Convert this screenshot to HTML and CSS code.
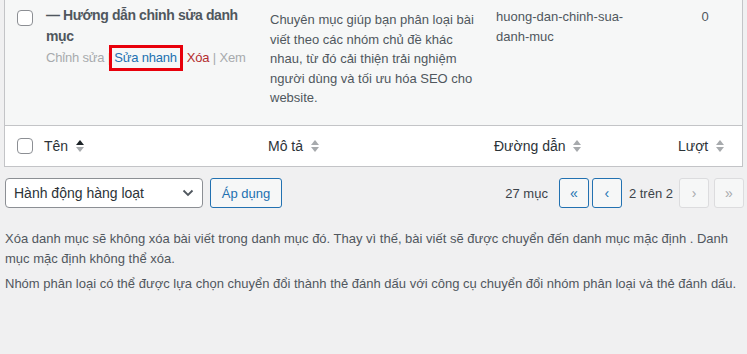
FILE: index.html
```html
<!DOCTYPE html>
<html lang="vi">
<head>
    <meta charset="UTF-8">
    <meta name="viewport" content="width=device-width, initial-scale=1.0">
    <title>Danh mục</title>
    <link rel="stylesheet" href="styles.css">
</head>
<body>
    <table class="list-table">
        <colgroup>
            <col class="col-check"><col class="col-name"><col class="col-desc"><col class="col-slug"><col class="col-posts">
        </colgroup>
        <tbody>
            <tr class="row">
                <th class="check"><span class="checkbox"></span></th>
                <td class="name">
                    <strong class="row-title">— Hướng dẫn chỉnh sửa danh mục</strong>
                    <div class="row-actions">
                        <span class="muted">Chỉnh sửa</span> <span class="sep">|</span> <span class="quick marked">Sửa nhanh</span> <span class="sep">|</span> <span class="delete">Xóa</span> <span class="sep">|</span> <span class="muted">Xem</span>
                    </div>
                </td>
                <td class="desc">Chuyên mục giúp bạn phân loại bài viết theo các nhóm chủ đề khác nhau, từ đó cải thiện trải nghiệm người dùng và tối ưu hóa SEO cho website.</td>
                <td class="slug">huong-dan-chinh-sua-danh-muc</td>
                <td class="posts">0</td>
            </tr>
        </tbody>
        <tfoot>
            <tr class="head">
                <th class="check"><span class="checkbox"></span></th>
                <th>Tên <svg class="sort" width="10" height="14" viewBox="0 0 10 14"><polygon points="1,6 5,1 9,6" fill="#1d2327"/><polygon points="1,8 9,8 5,13" fill="#a7aaad"/></svg></th>
                <th>Mô tả <svg class="sort" width="10" height="14" viewBox="0 0 10 14"><polygon points="1,6 5,1 9,6" fill="#a7aaad"/><polygon points="1,8 9,8 5,13" fill="#a7aaad"/></svg></th>
                <th>Đường dẫn <svg class="sort" width="10" height="14" viewBox="0 0 10 14"><polygon points="1,6 5,1 9,6" fill="#a7aaad"/><polygon points="1,8 9,8 5,13" fill="#a7aaad"/></svg></th>
                <th class="posts-head">Lượt <svg class="sort" width="10" height="14" viewBox="0 0 10 14"><polygon points="1,6 5,1 9,6" fill="#a7aaad"/><polygon points="1,8 9,8 5,13" fill="#a7aaad"/></svg></th>
            </tr>
        </tfoot>
    </table>

    <div class="tablenav">
        <div class="bulk">
            <div class="select">
                <span>Hành động hàng loạt</span>
                <svg width="12" height="8" viewBox="0 0 12 8"><polyline points="1.5,1.5 6,6 10.5,1.5" fill="none" stroke="#50575e" stroke-width="1.8"/></svg>
            </div>
            <button class="button">Áp dụng</button>
        </div>
        <div class="pages">
            <span class="count">27 mục</span>
            <span class="page-btn">«</span>
            <span class="page-btn">‹</span>
            <span class="page-info">2 trên 2</span>
            <span class="page-btn disabled">›</span>
            <span class="page-btn disabled">»</span>
        </div>
    </div>

    <div class="notes">
        <p>Xóa danh mục sẽ không xóa bài viết trong danh mục đó. Thay vì thế, bài viết sẽ được chuyển đến danh mục mặc định . Danh mục mặc định không thể xóa.</p>
        <p>Nhóm phân loại có thể được lựa chọn chuyển đổi thành thẻ đánh dấu với công cụ chuyển đổi nhóm phân loại và thẻ đánh dấu.</p>
    </div>
</body>
</html>
```

FILE: styles.css
```css
body {
    margin: 0;
    background: #f0f0f1;
    font-family: "Liberation Sans", Arial, sans-serif;
    font-size: 13px;
    color: #3c434a;
}

.list-table {
    margin-left: 4px;
    width: 739px;
    table-layout: fixed;
    border-spacing: 0;
    border: 1px solid #c3c4c7;
    border-top: 0;
}

.col-check { width: 31px; }
.col-name { width: 224px; }
.col-desc { width: 226px; }
.col-slug { width: 182px; }
.col-posts { width: 74px; }

.checkbox {
    display: block;
    width: 14px;
    height: 14px;
    border: 1px solid #8c8f94;
    border-radius: 4px;
    background: #fff;
}

.row {
    height: 125px;
}

.row th,
.row td {
    background: #f6f7f7;
    vertical-align: top;
    color: #50575e;
    padding: 0 10px;
}

.row .check {
    padding: 10px 0 0 12px;
}

.row .name {
    padding-top: 5px;
}

.row-title {
    display: block;
    font-size: 14px;
    line-height: 21px;
    letter-spacing: -0.4px;
    color: #50575e;
}

.row-actions {
    margin-top: 1px;
    line-height: 20px;
    white-space: nowrap;
    letter-spacing: -0.2px;
    color: #a7aaad;
}

.row-actions .muted { color: #a7aaad; }
.row-actions .sep { color: #a7aaad; }
.row-actions .quick { color: #2271b1; }
.row-actions .delete { color: #b32d2e; }

.marked {
    position: relative;
}

.marked::after {
    content: "";
    position: absolute;
    left: -5px;
    right: -6px;
    top: -5px;
    bottom: -6px;
    border: 3px solid #e8000b;
}

.row .desc {
    padding-top: 10px;
    line-height: 19.5px;
}

.row .slug {
    padding: 7px 24px 0 10px;
    line-height: 20px;
}

.row .posts {
    padding-top: 7px;
    line-height: 20px;
    text-align: center;
}

.head th {
    height: 40px;
    padding: 0 0 0 8px;
    background: #fff;
    border-top: 1px solid #c3c4c7;
    text-align: left;
    font-size: 14px;
    font-weight: normal;
    color: #2c3338;
    vertical-align: middle;
}

.head .check {
    padding-left: 12px;
}

.head .posts-head {
    padding-left: 10px;
}

.sort {
    vertical-align: middle;
    margin-left: 3px;
    margin-top: -3px;
}

.tablenav {
    display: flex;
    justify-content: space-between;
    align-items: center;
    margin-top: 11px;
    padding: 0 3px 0 5px;
}

.bulk {
    display: flex;
    gap: 7px;
}

.select {
    display: flex;
    align-items: center;
    justify-content: space-between;
    box-sizing: border-box;
    width: 198px;
    height: 30px;
    padding: 0 8px;
    border: 1px solid #8c8f94;
    border-radius: 4px;
    background: #fff;
    font-size: 14px;
    color: #2c3338;
}

.button {
    box-sizing: border-box;
    width: 72px;
    height: 30px;
    border: 1px solid #2271b1;
    border-radius: 3px;
    background: #f6f7f7;
    color: #2271b1;
    font-family: inherit;
    font-size: 13px;
    padding: 0;
}

.pages {
    display: flex;
    align-items: center;
    gap: 3px;
}

.count {
    margin-right: 8px;
}

.page-info {
    margin: 0 3px 0 4px;
}

.page-btn {
    box-sizing: border-box;
    width: 30px;
    height: 30px;
    display: flex;
    align-items: center;
    justify-content: center;
    border: 1px solid #2271b1;
    border-radius: 3px;
    background: #f6f7f7;
    color: #2271b1;
    font-size: 14px;
}

.page-btn.disabled {
    border-color: #dcdcde;
    color: #a7aaad;
}

.page-btn.disabled + .page-btn.disabled {
    margin-left: 2px;
}

.notes {
    margin-top: 21px;
    padding: 0 5px;
}

.notes p {
    margin: 0 0 5px;
    line-height: 20px;
    color: #50575e;
}
```
